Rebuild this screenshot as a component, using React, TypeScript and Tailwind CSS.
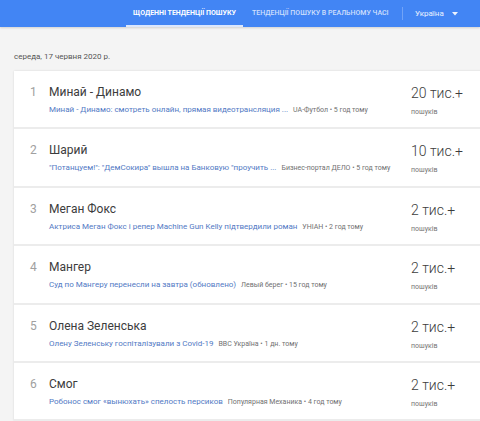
import React from 'react';

type Trend = {
  rank: number;
  title: string;
  article: string;
  source: string;
  count: string;
};

const trends: Trend[] = [
  { rank: 1, title: 'Минай - Динамо', article: 'Минай - Динамо: смотреть онлайн, прямая видеотрансляция ...', source: 'UA-Футбол • 5 год тому', count: '20 тис.+' },
  { rank: 2, title: 'Шарий', article: '"Потанцуем!": "ДемСокира" вышла на Банковую "проучить ...', source: 'Бизнес-портал ДЕЛО • 5 год тому', count: '10 тис.+' },
  { rank: 3, title: 'Меган Фокс', article: 'Актриса Меган Фокс і репер Machine Gun Kelly підтвердили роман', source: 'УНІАН • 2 год тому', count: '2 тис.+' },
  { rank: 4, title: 'Мангер', article: 'Суд по Мангеру перенесли на завтра (обновлено)', source: 'Левый берег • 15 год тому', count: '2 тис.+' },
  { rank: 5, title: 'Олена Зеленська', article: 'Олену Зеленську госпіталізували з Covid-19', source: 'BBC Україна • 1 дн. тому', count: '2 тис.+' },
  { rank: 6, title: 'Смог', article: 'Робонос смог «вынюхать» спелость персиков', source: 'Популярная Механика • 4 год тому', count: '2 тис.+' },
];

function Header() {
  return (
    <div className="h-[27px] bg-[#4285f4] flex items-stretch pl-[126px] shadow-[0_1px_2px_rgba(0,0,0,0.15)] relative z-10">
      <div className="w-[117px] flex items-center justify-center border-b-2 border-[#dbe7fd] pt-[2px]">
        <span className="text-[7px] font-bold text-white whitespace-nowrap">ЩОДЕННІ ТЕНДЕНЦІЇ ПОШУКУ</span>
      </div>
      <div className="w-[159px] flex items-center pl-[9px]">
        <span className="text-[7px] font-medium text-white/75 whitespace-nowrap">ТЕНДЕНЦІЇ ПОШУКУ В РЕАЛЬНОМУ ЧАСІ</span>
      </div>
      <div className="my-[7px] w-px bg-white/25" />
      <div className="flex items-center pl-[12px] gap-[8px]">
        <span className="text-[8px] text-white/90">Україна</span>
        <svg width="6" height="4" viewBox="0 0 6 4" aria-hidden>
          <path d="M0 0H6L3 3.5Z" fill="rgba(255,255,255,0.9)" />
        </svg>
      </div>
    </div>
  );
}

function TrendRow({ t }: { t: Trend }) {
  return (
    <div className="h-[58.4px] flex border-b-2 border-[#ececec] pl-[16px]">
      <div className="w-[19px] pt-[13px] text-[12px] leading-[16px] text-[#a0a0a0]">{t.rank}</div>
      <div className="w-[362px] shrink-0 pt-[13px]">
        <div className="text-[12px] leading-[16px] text-[#3c3c3c]">{t.title}</div>
        <div className="mt-[4px] flex items-baseline whitespace-nowrap leading-[12px]">
          <span className="text-[8px] text-[#5279c4]">{t.article}</span>
          <span className="ml-[5px] text-[7px] text-[#707070]">{t.source}</span>
        </div>
      </div>
      <div className="pt-[13px]">
        <div className="text-[14px] leading-[18px] text-[#3c3c3c] font-light whitespace-nowrap">{t.count}</div>
        <div className="mt-[5px] text-[7px] leading-[10px] text-[#757575]">пошуків</div>
      </div>
    </div>
  );
}

export default function App() {
  return (
    <div className="w-[480px] h-[421px] overflow-hidden bg-[#f4f4f4]" style={{ fontFamily: 'Roboto, "Noto Sans", sans-serif' }}>
      <Header />
      <div className="pl-[14px] pt-[25px]">
        <div className="text-[8px] leading-[10px] text-[#555] mb-[9px]">середа, 17 червня 2020 р.</div>
        <div className="w-[480px] bg-white shadow-[0_0_2px_rgba(0,0,0,0.12)]">
          {trends.map(t => (
            <TrendRow key={t.rank} t={t} />
          ))}
        </div>
      </div>
    </div>
  );
}
